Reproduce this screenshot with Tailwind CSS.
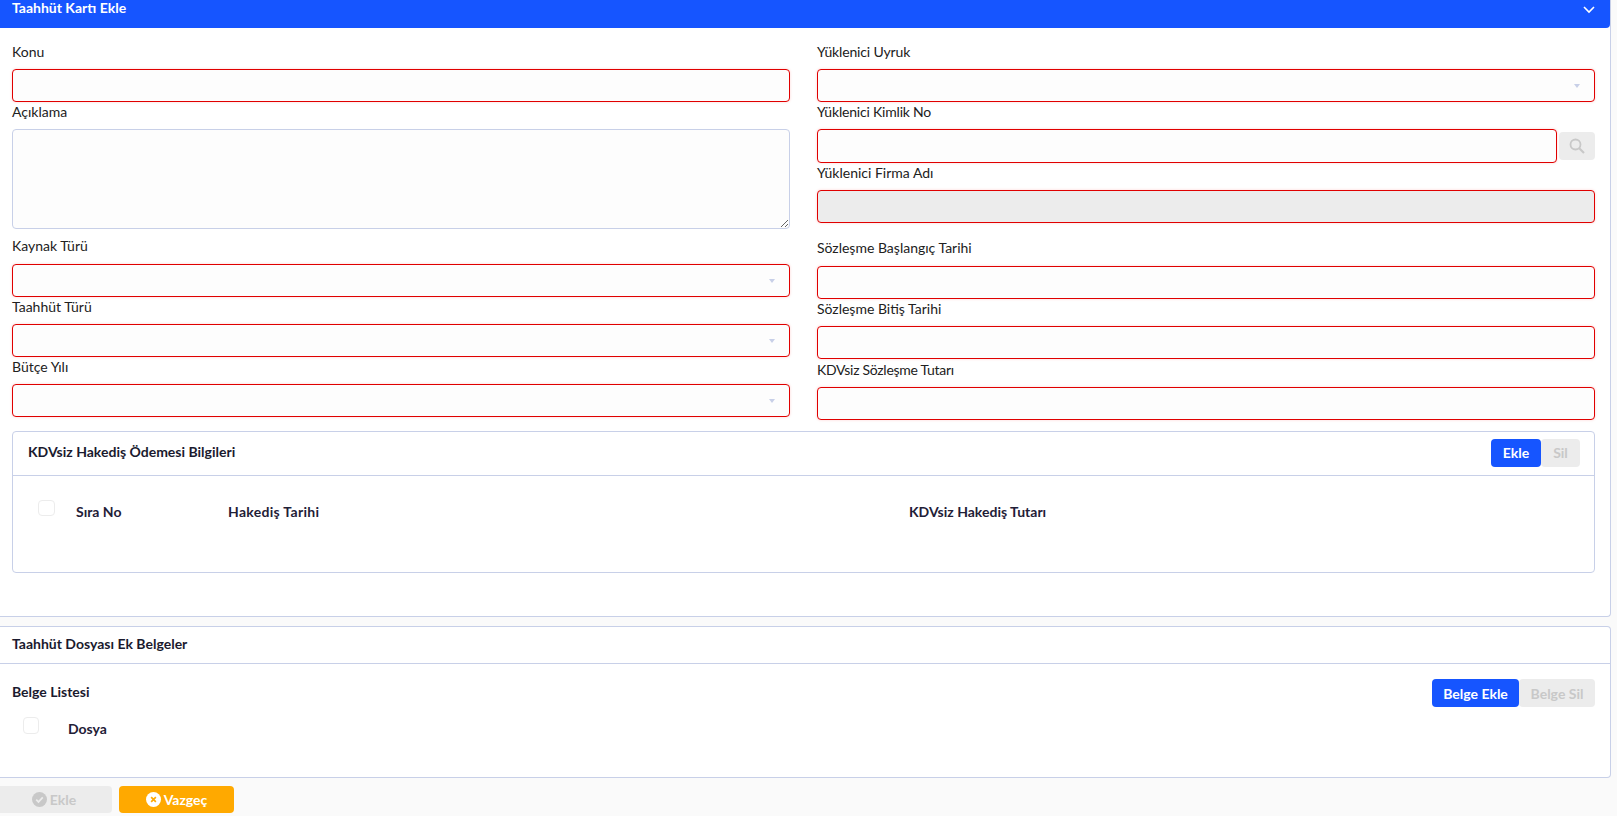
<!DOCTYPE html>
<html lang="tr">
<head>
  <meta charset="UTF-8">
  <title>Taahhüt Kartı Ekle</title>
  <script src="https://cdn.jsdelivr.net/npm/@tailwindcss/browser@4"></script>
</head>
<body class="bg-[#fafafa] h-[816px] overflow-hidden font-['Lato','Noto_Sans',sans-serif] text-[14px] text-[#212121]">
  <!-- Taahhut karti -->
  <section class="w-[1611px] h-[617px] bg-white border-r border-b border-[#c8d0e8] rounded-br">
    <header class="h-[28px] bg-[#1655ff] rounded-br flex justify-between pl-3 pr-[14px] text-white font-bold leading-[16px]">
      <span>Taahhüt Kartı Ekle</span>
      <svg class="w-[14px] h-[20px]" viewBox="0 0 14 20" fill="none" stroke="white" stroke-width="1.6"><path d="M2 7l5 5 5-5"/></svg>
    </header>

    <div class="grid grid-cols-[778px_778px] gap-x-[27px] pl-3 pt-[14px]">
      <!-- sol kolon -->
      <div>
        <label class="block leading-[20px] h-[27px]">Konu</label>
        <input class="block w-full h-[33px] bg-[#fdfdfd] border border-[#e00000] rounded shadow-[0_0_3px_#ffd5d5]">
        <label class="block leading-[20px] h-[27px]">Açıklama</label>
        <textarea class="block w-full h-[100px] bg-[#fdfdfd] border border-[#c8d0e8] rounded"></textarea>
        <label class="block leading-[20px] h-[28px] mt-[7px]">Kaynak Türü</label>
        <div class="relative h-[33px] bg-[#fdfdfd] border border-[#e00000] rounded shadow-[0_0_3px_#ffd5d5]">
          <span class="absolute right-[14px] top-[14px] border-x-[3.5px] border-x-transparent border-t-[4px] border-t-[#c8d0e8]"></span>
        </div>
        <label class="block leading-[20px] h-[27px]">Taahhüt Türü</label>
        <div class="relative h-[33px] bg-[#fdfdfd] border border-[#e00000] rounded shadow-[0_0_3px_#ffd5d5]">
          <span class="absolute right-[14px] top-[14px] border-x-[3.5px] border-x-transparent border-t-[4px] border-t-[#c8d0e8]"></span>
        </div>
        <label class="block leading-[20px] h-[27px]">Bütçe Yılı</label>
        <div class="relative h-[33px] bg-[#fdfdfd] border border-[#e00000] rounded shadow-[0_0_3px_#ffd5d5]">
          <span class="absolute right-[14px] top-[14px] border-x-[3.5px] border-x-transparent border-t-[4px] border-t-[#c8d0e8]"></span>
        </div>
      </div>

      <!-- sag kolon -->
      <div>
        <label class="block leading-[20px] h-[27px] tracking-[-0.15px]">Yüklenici Uyruk</label>
        <div class="relative h-[33px] bg-[#fdfdfd] border border-[#e00000] rounded shadow-[0_0_3px_#ffd5d5]">
          <span class="absolute right-[14px] top-[14px] border-x-[3.5px] border-x-transparent border-t-[4px] border-t-[#c8d0e8]"></span>
        </div>
        <label class="block leading-[20px] h-[27px] tracking-[-0.2px]">Yüklenici Kimlik No</label>
        <div class="flex items-center gap-[2px]">
          <input class="block w-[740px] h-[34px] bg-[#fdfdfd] border border-[#e00000] rounded shadow-[0_0_3px_#ffd5d5]">
          <button class="w-[36px] h-[28px] bg-[#ececec] rounded flex items-center justify-center">
            <svg class="w-[16px] h-[16px]" viewBox="0 0 16 16" fill="none" stroke="#c8c8c8" stroke-width="1.8"><circle cx="6.5" cy="6.5" r="5"/><path d="M10.2 10.2L15 15" stroke-width="2.2"/></svg>
          </button>
        </div>
        <label class="block leading-[20px] h-[27px]">Yüklenici Firma Adı</label>
        <input disabled class="block w-full h-[33px] bg-[#ececec] border border-[#e00000] rounded shadow-[0_0_3px_#ffd5d5]">
        <label class="block leading-[20px] h-[28px] mt-[15px]">Sözleşme Başlangıç Tarihi</label>
        <input class="block w-full h-[33px] bg-[#fdfdfd] border border-[#e00000] rounded shadow-[0_0_3px_#ffd5d5]">
        <label class="block leading-[20px] h-[27px]">Sözleşme Bitiş Tarihi</label>
        <input class="block w-full h-[33px] bg-[#fdfdfd] border border-[#e00000] rounded shadow-[0_0_3px_#ffd5d5]">
        <label class="block leading-[20px] h-[27px] mt-px tracking-[-0.28px]">KDVsiz Sözleşme Tutarı</label>
        <input class="block w-full h-[33px] bg-[#fdfdfd] border border-[#e00000] rounded shadow-[0_0_3px_#ffd5d5]">
      </div>
    </div>

    <!-- hakedis tablosu -->
    <div class="w-[1583px] h-[142px] ml-3 mt-[11px] border border-[#c8d0e8] rounded">
      <div class="h-[44px] border-b border-[#c8d0e8] flex items-center justify-between pl-[15px] pr-[14px] pb-[2px]">
        <b class="text-[#1a1a2e] mb-[3px]">KDVsiz Hakediş Ödemesi Bilgileri</b>
        <div class="flex font-bold">
          <button class="w-[50px] h-[28px] bg-[#1655ff] text-white rounded">Ekle</button>
          <button class="w-[39px] h-[28px] bg-[#ececec] text-[#c8c8c8] rounded">Sil</button>
        </div>
      </div>
      <div class="flex items-center h-[32px] mt-[19px] pl-[25px] font-bold text-[#1f2037]">
        <span class="w-[17px] h-[16px] -mt-[6px] bg-white border border-[#ececec] rounded"></span>
        <span class="w-[152px] ml-[21px]">Sıra No</span>
        <span class="w-[681px] tracking-[0.3px]">Hakediş Tarihi</span>
        <span>KDVsiz Hakediş Tutarı</span>
      </div>
    </div>
  </section>

  <!-- ek belgeler -->
  <section class="w-[1611px] h-[152px] mt-[9px] bg-white border-y border-r border-[#c8d0e8] rounded-r">
    <div class="h-[37px] border-b border-[#c8d0e8] flex items-center pl-3 pb-[3px] font-bold text-[#1a1a2e]">Taahhüt Dosyası Ek Belgeler</div>
    <div class="flex items-center justify-between h-[28px] mt-[15px] pl-3 pr-[15px] font-bold text-[#1a1a2e]">
      <span class="mb-[3px]">Belge Listesi</span>
      <div class="flex">
        <button class="w-[87px] h-[28px] bg-[#1655ff] text-white rounded">Belge Ekle</button>
        <button class="w-[76px] h-[28px] bg-[#ececec] text-[#c8c8c8] rounded">Belge Sil</button>
      </div>
    </div>
    <div class="flex items-center h-[20px] mt-[11px] pl-[23px] font-bold text-[#1f2037]">
      <span class="w-[16px] h-[17px] -mt-[6px] bg-white border border-[#ececec] rounded"></span>
      <span class="ml-[29px]">Dosya</span>
    </div>
  </section>

  <!-- alt butonlar -->
  <footer class="flex gap-[7px] mt-[8px] font-bold">
    <button class="w-[112px] h-[27px] bg-[#ececec] text-[#c8c8c8] rounded-r flex items-center justify-center gap-[3px] pr-1">
      <svg class="w-[15px] h-[15px]" viewBox="0 0 16 16"><circle cx="8" cy="8" r="8" fill="#c8c8c8"/><path d="M4.5 8.2l2.4 2.4 4.6-4.8" fill="none" stroke="#ececec" stroke-width="1.8"/></svg>
      Ekle
    </button>
    <button class="w-[115px] h-[27px] bg-[#ffa900] text-white rounded flex items-center justify-center gap-[3px]">
      <svg class="w-[15px] h-[15px]" viewBox="0 0 16 16"><circle cx="8" cy="8" r="8" fill="white"/><path d="M5.5 5.5l5 5m0-5l-5 5" fill="none" stroke="#ffa900" stroke-width="1.8"/></svg>
      Vazgeç
    </button>
  </footer>
</body>
</html>
